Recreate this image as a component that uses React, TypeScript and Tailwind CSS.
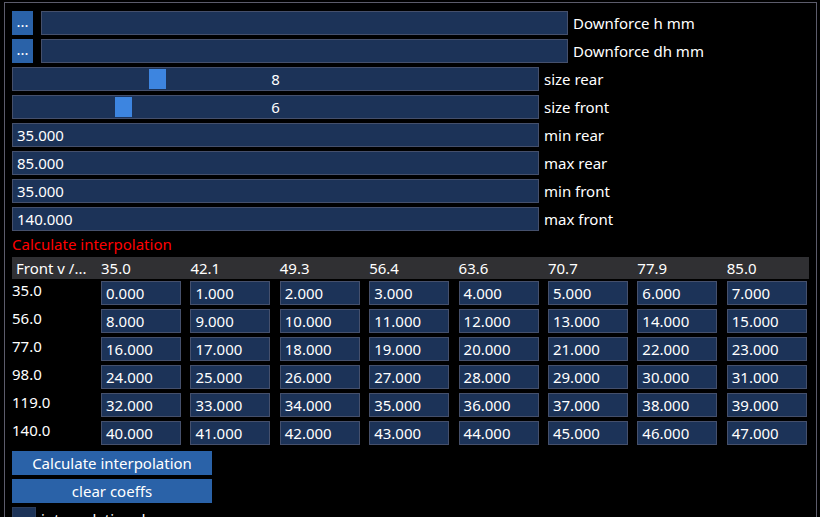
import React from 'react'

const font = { fontFamily: '"Noto Sans", "Open Sans", sans-serif' }

const rearCols = ['35.0', '42.1', '49.3', '56.4', '63.6', '70.7', '77.9', '85.0']
const frontRows = ['35.0', '56.0', '77.0', '98.0', '119.0', '140.0']

function Field({ value, label, className = 'w-[527px]' }: { value?: string; label?: string; className?: string }) {
  return (
    <div className="flex items-center h-[24px]">
      <div className={`${className} h-[24px] bg-[#1c3358] border border-[#45506c] px-[4px] flex items-center leading-[18px]`}>
        {value}
      </div>
      {label && <span className="ml-[5px] leading-[18px]">{label}</span>}
    </div>
  )
}

// 0..max slider, grab width 17px per step
function Slider({ value, label }: { value: number; label: string }) {
  return (
    <div className="flex items-center h-[24px]">
      <div className="relative w-[527px] h-[24px] bg-[#1c3358] border border-[#45506c] flex items-center justify-center leading-[18px]">
        <div
          className="absolute top-[1px] h-[20px] w-[17px] bg-[#3d85e0]"
          style={{ left: value * 17 }}
        />
        <span className="relative">{value}</span>
      </div>
      <span className="ml-[5px] leading-[18px]">{label}</span>
    </div>
  )
}

export default function App() {
  return (
    <div className="w-[820px] h-[517px] overflow-hidden bg-black text-white text-[15px]" style={font}>
      <div className="ml-[4px] mt-[2px] w-[813px] h-[560px] border border-[#5c5c6b] pl-[7px] pt-[8px] flex flex-col gap-[4px]">
        {/* file pickers */}
        <div className="flex items-center gap-[8px]">
          <button className="w-[21px] h-[24px] bg-[#2a62a8] flex items-center justify-center leading-none pb-[4px]">...</button>
          <Field label="Downforce h mm" />
        </div>
        <div className="flex items-center gap-[8px]">
          <button className="w-[21px] h-[24px] bg-[#2a62a8] flex items-center justify-center leading-none pb-[4px]">...</button>
          <Field label="Downforce dh mm" />
        </div>

        <Slider value={8} label="size rear" />
        <Slider value={6} label="size front" />

        <Field value="35.000" label="min rear" />
        <Field value="85.000" label="max rear" />
        <Field value="35.000" label="min front" />
        <Field value="140.000" label="max front" />

        <div className="h-[18px] leading-[18px] text-[#ff0000]">Calculate interpolation</div>

        {/* coefficient table */}
        <div className="w-[797px]">
          <div className="grid grid-cols-[89px_repeat(7,89.4px)_1fr] h-[22px] bg-[#303033] items-center leading-[18px]">
            <span className="pl-[4px]">Front v /...</span>
            {rearCols.map((c) => (
              <span key={c}>{c}</span>
            ))}
          </div>
          {frontRows.map((r, i) => (
            <div key={r} className="grid grid-cols-[89px_repeat(7,89.4px)_1fr] h-[28px] pt-[2px] items-start leading-[18px]">
              <span>{r}</span>
              {rearCols.map((_, j) => (
                <div
                  key={j}
                  className="w-[80px] h-[24px] bg-[#1c3358] border border-[#45506c] px-[4px] flex items-center"
                >
                  {(i * 8 + j).toFixed(3)}
                </div>
              ))}
            </div>
          ))}
        </div>

        <button className="w-[200px] h-[24px] bg-[#2a62a8] leading-[18px] text-center">Calculate interpolation</button>
        <button className="w-[200px] h-[24px] bg-[#2a62a8] leading-[18px] text-center">clear coeffs</button>

        <div className="flex items-center gap-[5px]">
          <div className="w-[24px] h-[24px] bg-[#1c3358] border border-[#2b3d5c]" />
          <span className="leading-[18px]">interpolation done</span>
        </div>
      </div>
    </div>
  )
}
